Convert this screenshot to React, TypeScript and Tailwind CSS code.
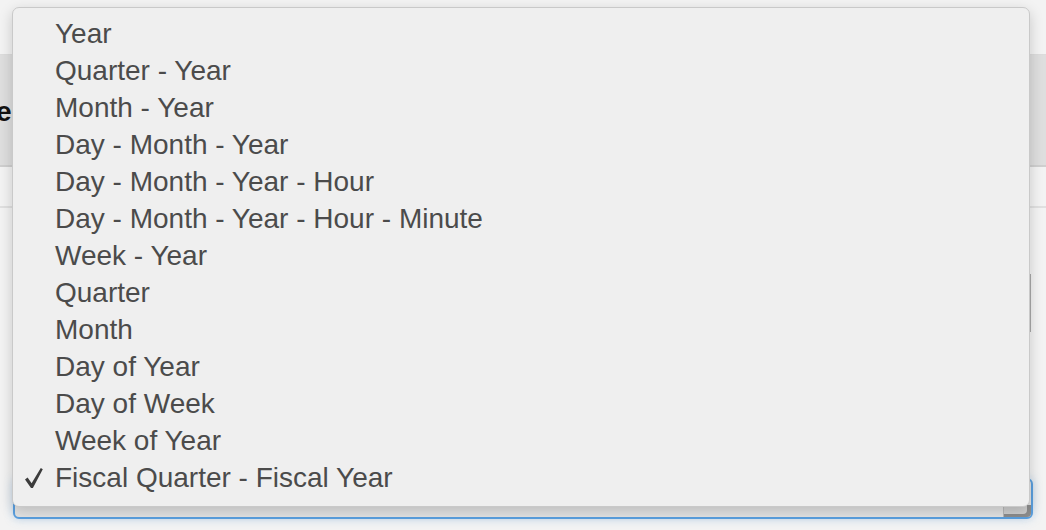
import { Fragment } from "react";

const options = [
  "Year",
  "Quarter - Year",
  "Month - Year",
  "Day - Month - Year",
  "Day - Month - Year - Hour",
  "Day - Month - Year - Hour - Minute",
  "Week - Year",
  "Quarter",
  "Month",
  "Day of Year",
  "Day of Week",
  "Week of Year",
  "Fiscal Quarter - Fiscal Year",
];

const selected = "Fiscal Quarter - Fiscal Year";

const CheckMark = () => (
  <svg width="20" height="22" viewBox="0 0 20 22" className="text-[#3c3c3c]">
    <path d="M1 12.5 L3.6 10.6 L7.6 16.2 L16.8 1 L18.8 2.2 L8.9 21 L7 21 Z" fill="currentColor" />
  </svg>
);

const App = () => {
  return (
    <div
      className="relative w-[1046px] h-[530px] overflow-hidden bg-[#f3f3f3]"
      style={{ fontFamily: '"Liberation Sans", Arial, sans-serif' }}
    >
      {/* page underneath the menu */}
      <div className="flex flex-col">
        <div className="h-[55px] border-b border-[#dcdcdc]" />
        <div className="h-[112px] bg-[#dedede] border-b-2 border-[#cfcfcf] flex items-center">
          <span className="-ml-[4px] mt-[3px] text-[28px] font-bold text-[#111]">e:</span>
        </div>
        <div className="h-[41px] border-b-2 border-[#e0e0e0]" />
        <div className="h-[66px]" />
        <div className="h-[58px] flex justify-end">
          <div className="w-[17px] border-l-2 border-[#a9a9a9]" />
        </div>
        <div className="h-[146px]" />
        <div className="mx-[13px] h-[41px] rounded-[6px] border-2 border-[#5a9fdf] bg-[#e3e3e3] flex justify-end items-end shadow-[0_0_10px_rgba(90,159,223,0.35)]">
          <div className="w-[28px] h-[12px] bg-[#cfcfcf] border-l border-[#b8b8b8] rounded-br-[4px] shadow-[inset_-4px_-3px_0_#8d8d8d]" />
        </div>
      </div>

      {/* open select menu */}
      <div className="absolute left-[12px] top-[7px] w-[1018px] h-[500px] rounded-[7px] bg-[#efefef] border border-[#c9c9c9] shadow-[0_4px_14px_rgba(0,0,0,0.18)] pt-[7px]">
        {options.map((opt) => (
          <div key={opt} className="h-[37px] flex items-center text-[28px] leading-[37px] text-[#4b4b4b]">
            <div className="w-[42px] flex justify-end pr-[11px]">
              {opt === selected ? (
                <Fragment>
                  <CheckMark />
                </Fragment>
              ) : null}
            </div>
            <span>{opt}</span>
          </div>
        ))}
      </div>
    </div>
  );
};

export default App;
